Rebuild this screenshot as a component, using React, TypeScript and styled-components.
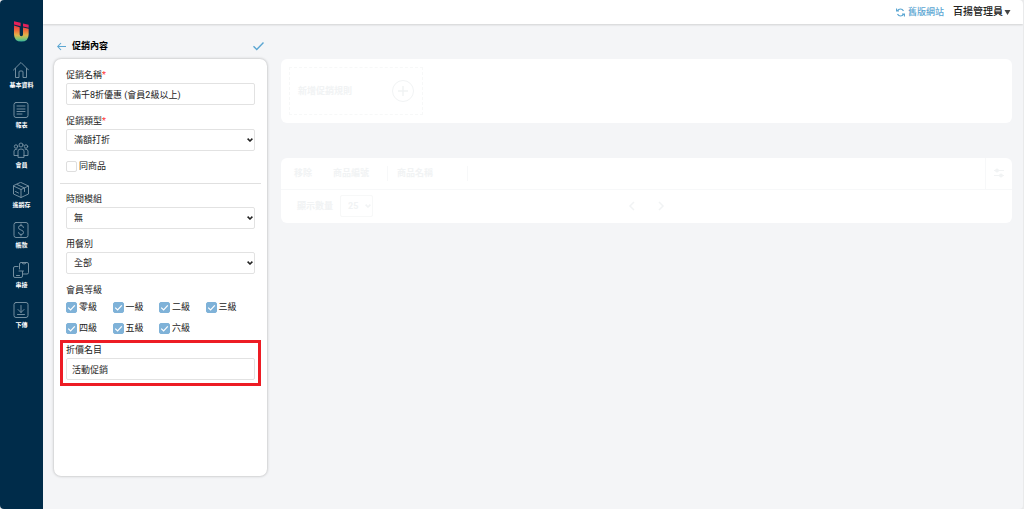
import React from 'react';
import styled, { createGlobalStyle } from 'styled-components';

const GlobalStyle = createGlobalStyle`
  *, *::before, *::after { box-sizing: border-box; }
  body {
    margin: 0;
    background: #e9eaeb;
    color: #222;
    font-family: Roboto, "Noto Sans CJK TC", sans-serif;
    font-size: 9px;
    line-height: 14px;
  }
  button, input, select { font: inherit; color: inherit; margin: 0; }
  svg { display: block; flex: none; }
`;

const Shell = styled.div`
  display: flex;
  min-height: 100vh;
  margin-right: 1px;
  border-radius: 4px;
  overflow: hidden;
  background: #f4f5f7;
`;

const Sidebar = styled.nav`
  flex: none;
  width: 43px;
  padding-top: 21px;
  display: flex;
  flex-direction: column;
  align-items: center;
  background: #002c4a;
`;

const NavList = styled.ul`
  list-style: none;
  margin: 20px 0 0;
  padding: 0;
  display: flex;
  flex-direction: column;
  gap: 12px;
`;

const NavLink = styled.a`
  display: flex;
  flex-direction: column;
  align-items: center;
  gap: 3px;
  height: 28px;
  color: #fff;
  font-size: 6px;
  font-weight: 700;
  line-height: 8px;
  white-space: nowrap;
  text-decoration: none;
  svg { color: #7f98a8; }
`;

const Main = styled.div`
  flex: 1;
  min-width: 0;
  display: flex;
  flex-direction: column;
`;

const TopBar = styled.header`
  height: 24px;
  padding: 0 12px;
  display: flex;
  align-items: center;
  justify-content: flex-end;
  gap: 9px;
  background: #fff;
  box-shadow: 0 1px 2px rgba(0, 0, 0, 0.15);
`;

const SiteLink = styled.a`
  display: flex;
  align-items: center;
  gap: 3px;
  color: #5ba6d2;
  font-weight: 500;
  text-decoration: none;
`;

const UserButton = styled.button`
  display: flex;
  align-items: center;
  gap: 1px;
  padding: 0;
  border: 0;
  background: none;
  font-size: 10px;
  font-weight: 500;
  color: #222;
`;

const Workspace = styled.main`
  flex: 1;
  display: flex;
  align-items: stretch;
  gap: 14px;
  padding: 14px 11px 33px;
`;

const Editor = styled.form`
  flex: none;
  width: 213px;
  display: flex;
  flex-direction: column;
  gap: 5px;
`;

const EditorHeader = styled.div`
  display: flex;
  align-items: center;
  gap: 6px;
  height: 16px;
  padding: 0 3px;
`;

const Title = styled.h1`
  flex: 1;
  margin: 0;
  font-size: 9px;
  font-weight: 700;
  color: #000;
`;

const IconButton = styled.button<{ $color?: string }>`
  display: flex;
  padding: 0;
  border: 0;
  background: none;
  color: ${(p) => p.$color ?? '#5ba6d2'};
`;

const Panel = styled.div`
  flex: 1;
  padding: 9px 12px;
  display: flex;
  flex-direction: column;
  background: #fff;
  border-radius: 7px;
  box-shadow: 0 0 3px rgba(0, 0, 0, 0.3);
`;

const Fields = styled.div<{ $gap: string }>`
  display: flex;
  flex-direction: column;
  gap: ${(p) => p.$gap};
`;

const Field = styled.div`
  display: flex;
  flex-direction: column;
  gap: 1px;
`;

const Label = styled.label`
  display: block;
  height: 14px;
`;

const Required = styled.span`
  color: #f33;
`;

const TextInput = styled.input`
  width: 100%;
  height: 22px;
  padding: 0 5px;
  border: 1px solid #e2e2e2;
  border-radius: 2px;
  background: #fff;
`;

const SelectWrap = styled.div<{ $width?: string }>`
  position: relative;
  width: ${(p) => p.$width ?? '100%'};
  svg {
    position: absolute;
    right: 2px;
    top: 9px;
    pointer-events: none;
  }
`;

const Select = styled.select<{ $faint?: boolean }>`
  appearance: none;
  display: block;
  width: 100%;
  height: 22px;
  padding: 0 7px;
  border: 1px solid ${(p) => (p.$faint ? '#f7f8f8' : '#e2e2e2')};
  border-radius: 2px;
  background: #fff;
`;

const Divider = styled.hr`
  margin: 11px -6px 8px;
  border: 0;
  border-top: 1px solid #e0e0e0;
`;

const Levels = styled.fieldset`
  margin: 9px 0 6px;
  padding: 0 3px 0 0;
  border: 0;
`;

const Legend = styled.legend`
  padding: 0;
  margin-bottom: 4px;
`;

const LevelGrid = styled.div`
  display: grid;
  grid-template-columns: repeat(4, 1fr);
  row-gap: 9px;
`;

const CheckLabel = styled.label`
  display: flex;
  align-items: center;
  gap: 2px;
  height: 12px;
  line-height: 12px;
  white-space: nowrap;
`;

const CheckWrap = styled.span`
  display: grid;
  width: 11px;
  height: 11px;
  > * { grid-area: 1 / 1; place-self: center; }
  svg { pointer-events: none; }
`;

const CheckInput = styled.input`
  appearance: none;
  width: 11px;
  height: 11px;
  border: 1px solid #dedede;
  border-radius: 2px;
  background: #fff;
  &:checked { border-color: #7fb2d8; background: #7fb2d8; }
  &:not(:checked) + svg { visibility: hidden; }
`;

const Highlight = styled.div`
  margin: 0 -6px;
  padding: 0 3px 3px;
  border: 3px solid #ed1c24;
`;

const Content = styled.div`
  flex: 1;
  min-width: 0;
  padding-top: 21px;
  display: flex;
  flex-direction: column;
  gap: 35px;
  color: #f1f3f4;
`;

const Card = styled.section`
  background: #fff;
  border-radius: 6px;
`;

const RuleCard = styled(Card)`
  padding: 8px;
`;

const AddRule = styled.button`
  display: flex;
  align-items: center;
  justify-content: space-between;
  width: 134px;
  height: 48px;
  padding: 0 8px;
  border: 1px dashed #f7f8f8;
  background: none;
  font-weight: 700;
`;

const Table = styled.table`
  width: 100%;
  table-layout: fixed;
  border-collapse: collapse;
`;

const Th = styled.th<{ $width?: string; $pad?: string; $left?: boolean }>`
  width: ${(p) => p.$width ?? 'auto'};
  height: 31px;
  padding: 0 0 0 ${(p) => p.$pad ?? '0'};
  border-bottom: 1px solid #f7f8f9;
  border-left: ${(p) => (p.$left ? '1px solid #f7f8f9' : '0')};
  text-align: left;
  font-weight: 700;
`;

const HeadCell = styled.div<{ $line?: boolean }>`
  height: 15px;
  line-height: 15px;
  border-right: ${(p) => (p.$line ? '1px solid #f7f8f9' : '0')};
`;

const TableFooter = styled.div`
  display: grid;
  grid-template-columns: 1fr auto 1fr;
  align-items: center;
  height: 33px;
  padding: 0 16px;
`;

const PageSize = styled.div`
  display: flex;
  align-items: center;
  gap: 7px;
  font-weight: 700;
`;

const Pager = styled.div`
  display: flex;
  gap: 21px;
`;

type Shape = React.ReactNode;

const lineIcon = (shape: Shape) => (
  <svg width="16" height="16" viewBox="0 0 32 32" fill="none" stroke="currentColor" strokeWidth="1.8" strokeLinecap="round" strokeLinejoin="round" aria-hidden="true">
    {shape}
  </svg>
);

const navItems: { label: string; shape: Shape }[] = [
  { label: '基本資料', shape: <path d="M1 16 16 1l15 15M5 13v18h7V20q0-2 2-2h4q2 0 2 2v11h7V13" /> },
  { label: '報表', shape: <><rect x="2" y="1" width="28" height="30" rx="4" /><path d="M8 8h16M8 14h16M8 19h16M8 24h10" /></> },
  {
    label: '會員',
    shape: <>
      <circle cx="16" cy="6" r="4" /><circle cx="6" cy="9" r="3.4" /><circle cx="26" cy="9" r="3.4" />
      <path d="M10 30V18q0-4 6-4t6 4v12ZM10 27H2V18q0-4 6-4M22 27h8V18q0-4-6-4" />
    </>,
  },
  { label: '進銷存', shape: <path d="M16 1 31 8v16l-15 7L1 24V8ZM1 8l15 7 15-7M16 15v16M8 5l15 7v7M5 19l6 3" /> },
  { label: '帳款', shape: <><rect x="2" y="1" width="28" height="30" rx="4" /><path d="M21 11q0-4-5-4t-5 4q0 4 5 5t5 5q0 4-5 4t-5-4M16 4v3M16 25v3" /></> },
  {
    label: '串接',
    shape: <>
      <path d="M13 14V4q0-3 3-3h12q3 0 3 3v17q0 3-3 3h-8M18 1q0 3 4 3t4-3" />
      <path d="M10 9H4q-3 0-3 3v16q0 3 3 3h12q3 0 3-3v-9M7 27h6M12 18h9" />
    </>,
  },
  { label: '下傳', shape: <><rect x="2" y="1" width="28" height="30" rx="4" /><path d="M16 7v14M10 15l6 6 6-6M9 25h14" /></> },
];

const Logo = () => (
  <svg width="15" height="21" viewBox="0 0 45 62" role="img" aria-label="U">
    <defs>
      <linearGradient id="logoFill" x1="0" y1="0" x2="0" y2="1">
        <stop offset="0" stopColor="#e8334a" />
        <stop offset="0.3" stopColor="#ef6a3a" />
        <stop offset="0.6" stopColor="#e2b44a" />
        <stop offset="0.8" stopColor="#8fc36a" />
        <stop offset="1" stopColor="#35b6a0" />
      </linearGradient>
    </defs>
    <path d="M0 0 20 5v10L0 10ZM27 7l17 4v9l-17-4Z" fill="#e5205a" />
    <path d="M0 13l17 5v22q0 5 5 5t5-5V19l17 4v16q0 22-22 22T0 39Z" fill="url(#logoFill)" />
  </svg>
);

const Chevron = () => (
  <svg width="6" height="4" viewBox="0 0 6 4" fill="none" stroke="currentColor" strokeWidth="1.5" aria-hidden="true">
    <path d="M.6.6 3 3 5.4.6" />
  </svg>
);

function SelectField({ id, label, value, required }: { id: string; label: string; value: string; required?: boolean }) {
  return (
    <Field>
      <Label htmlFor={id}>{label}{required && <Required>*</Required>}</Label>
      <SelectWrap>
        <Select id={id} defaultValue={value}><option>{value}</option></Select>
        <Chevron />
      </SelectWrap>
    </Field>
  );
}

function Check({ label, checked }: { label: string; checked?: boolean }) {
  return (
    <CheckLabel>
      <CheckWrap>
        <CheckInput type="checkbox" defaultChecked={checked} />
        <svg width="9" height="9" viewBox="0 0 9 9" fill="none" stroke="#fff" strokeWidth="1.2" aria-hidden="true"><path d="M1.2 4.6 3.6 7 7.8 2.4" /></svg>
      </CheckWrap>
      {label}
    </CheckLabel>
  );
}

const levels = ['零級', '一級', '二級', '三級', '四級', '五級', '六級'];

export default function App() {
  return (
    <>
      <GlobalStyle />
      <Shell>
        <Sidebar>
          <Logo />
          <NavList>
            {navItems.map((item) => (
              <li key={item.label}>
                <NavLink href="#">{lineIcon(item.shape)}{item.label}</NavLink>
              </li>
            ))}
          </NavList>
        </Sidebar>
        <Main>
          <TopBar>
            <SiteLink href="#">
              <svg width="9" height="9" viewBox="0 0 18 18" fill="none" stroke="currentColor" strokeWidth="2.4" aria-hidden="true">
                <path d="M1 1v5h5M2 6q3-4 7-4 4 0 6 4M17 17v-5h-5M16 12q-3 4-7 4-4 0-6-4" />
              </svg>
              舊版網站
            </SiteLink>
            <UserButton type="button">
              百揚管理員
              <svg width="7" height="5" viewBox="0 0 7 5" fill="#444" aria-hidden="true"><path d="M.5 0h6L3.500 5Z" /></svg>
            </UserButton>
          </TopBar>
          <Workspace>
            <Editor>
              <EditorHeader>
                <IconButton type="button" aria-label="返回">
                  <svg width="9" height="9" viewBox="0 0 18 18" fill="none" stroke="currentColor" strokeWidth="2.2" aria-hidden="true"><path d="M18 9H2M8 2 1.500 9 8 16" /></svg>
                </IconButton>
                <Title>促銷內容</Title>
                <IconButton type="submit" aria-label="儲存">
                  <svg width="11" height="9" viewBox="0 0 22 18" fill="none" stroke="currentColor" strokeWidth="2.8" aria-hidden="true"><path d="M1 8.500 7.500 15 21 1" /></svg>
                </IconButton>
              </EditorHeader>
              <Panel>
                <Fields $gap="9px">
                  <Field>
                    <Label htmlFor="name">促銷名稱<Required>*</Required></Label>
                    <TextInput id="name" defaultValue="滿千8折優惠 (會員2級以上)" />
                  </Field>
                  <SelectField id="type" label="促銷類型" value="滿額打折" required />
                  <Check label="同商品" />
                </Fields>
                <Divider />
                <Fields $gap="8px">
                  <SelectField id="time" label="時間模組" value="無" />
                  <SelectField id="dining" label="用餐別" value="全部" />
                </Fields>
                <Levels>
                  <Legend>會員等級</Legend>
                  <LevelGrid>
                    {levels.map((level) => <Check key={level} label={level} checked />)}
                  </LevelGrid>
                </Levels>
                <Highlight>
                  <Field>
                    <Label htmlFor="item">折價名目</Label>
                    <TextInput id="item" defaultValue="活動促銷" />
                  </Field>
                </Highlight>
              </Panel>
            </Editor>
            <Content>
              <RuleCard>
                <AddRule type="button">
                  新增促銷規則
                  <svg width="22" height="22" viewBox="0 0 22 22" fill="none" stroke="currentColor" aria-hidden="true">
                    <circle cx="11" cy="11" r="10.500" /><path d="M11 6v10M6 11h10" strokeWidth="1.500" />
                  </svg>
                </AddRule>
              </RuleCard>
              <Card>
                <Table>
                  <thead>
                    <tr>
                      <Th scope="col" $width="40px" $pad="13px"><HeadCell>移除</HeadCell></Th>
                      <Th scope="col" $width="67px" $pad="12px"><HeadCell $line>商品編號</HeadCell></Th>
                      <Th scope="col" $width="80px" $pad="9px"><HeadCell $line>商品名稱</HeadCell></Th>
                      <Th />
                      <Th $width="27px" $pad="7px" $left>
                        <IconButton type="button" aria-label="欄位設定" $color="#f1f3f4">
                          <svg width="12" height="10" viewBox="0 0 12 10" fill="currentColor" stroke="currentColor" aria-hidden="true">
                            <path d="M1 2.500h10M1 7.500h10" /><circle cx="4" cy="2.500" r="1.500" /><circle cx="8" cy="7.500" r="1.500" />
                          </svg>
                        </IconButton>
                      </Th>
                    </tr>
                  </thead>
                </Table>
                <TableFooter>
                  <PageSize>
                    <label htmlFor="size">顯示數量</label>
                    <SelectWrap $width="33px">
                      <Select id="size" defaultValue="25" $faint><option>25</option></Select>
                      <Chevron />
                    </SelectWrap>
                  </PageSize>
                  <Pager>
                    <IconButton type="button" aria-label="上一頁" $color="#f1f3f4">
                      <svg width="8" height="10" viewBox="0 0 8 10" fill="none" stroke="currentColor" strokeWidth="1.500" aria-hidden="true"><path d="M6 1 2 5l4 4" /></svg>
                    </IconButton>
                    <IconButton type="button" aria-label="下一頁" $color="#f1f3f4">
                      <svg width="8" height="10" viewBox="0 0 8 10" fill="none" stroke="currentColor" strokeWidth="1.500" aria-hidden="true"><path d="m2 1 4 4-4 4" /></svg>
                    </IconButton>
                  </Pager>
                </TableFooter>
              </Card>
            </Content>
          </Workspace>
        </Main>
      </Shell>
    </>
  );
}
